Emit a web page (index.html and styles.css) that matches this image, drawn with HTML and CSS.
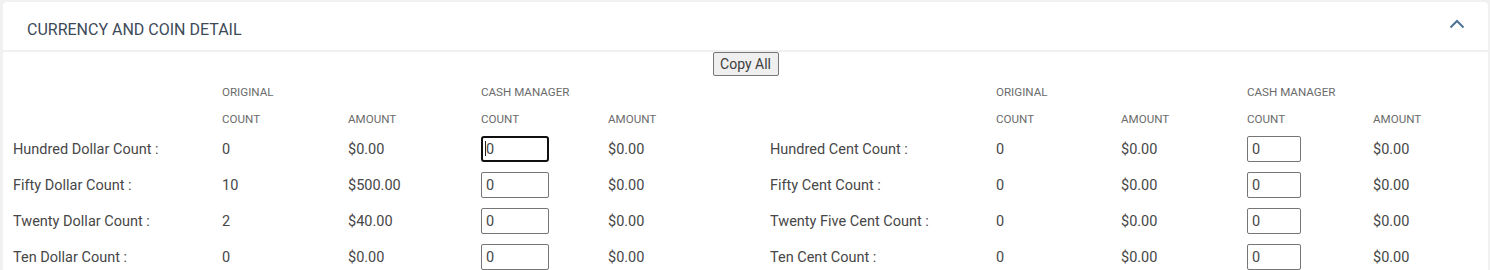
FILE: index.html
```html
<!DOCTYPE html>
<html lang="en">
<head>
<meta charset="utf-8">
<title>Currency and Coin Detail</title>
<link rel="stylesheet" href="styles.css">
</head>
<body>
<section class="card">
  <header class="card-head">
    <h2 class="title">CURRENCY AND COIN DETAIL</h2>
    <svg class="chev" width="16" height="10" viewBox="0 0 16 10"><polyline points="1.5,8.5 8,2 14.5,8.5" fill="none" stroke="#4f7395" stroke-width="2"/></svg>
  </header>
  <div class="card-body">
    <div class="btn-row"><button class="copy-btn">Copy All</button></div>
    <div class="tables">
      <div class="grid grid-left">
        <div></div><div class="th">ORIGINAL</div><div></div><div class="th">CASH MANAGER</div><div></div>
        <div class="th2"></div><div class="th2">COUNT</div><div class="th2">AMOUNT</div><div class="th2">COUNT</div><div class="th2">AMOUNT</div>

        <div class="td">Hundred Dollar Count :</div><div class="td">0</div><div class="td">$0.00</div><div class="td"><input class="cnt wide focused" value="0"><span class="caret"></span></div><div class="td">$0.00</div>
        <div class="td">Fifty Dollar Count :</div><div class="td">10</div><div class="td">$500.00</div><div class="td"><input class="cnt wide" value="0"></div><div class="td">$0.00</div>
        <div class="td">Twenty Dollar Count :</div><div class="td">2</div><div class="td">$40.00</div><div class="td"><input class="cnt wide" value="0"></div><div class="td">$0.00</div>
        <div class="td">Ten Dollar Count :</div><div class="td">0</div><div class="td">$0.00</div><div class="td"><input class="cnt wide" value="0"></div><div class="td">$0.00</div>
      </div>
      <div class="grid grid-right">
        <div></div><div class="th">ORIGINAL</div><div></div><div class="th">CASH MANAGER</div><div></div>
        <div class="th2"></div><div class="th2">COUNT</div><div class="th2">AMOUNT</div><div class="th2">COUNT</div><div class="th2">AMOUNT</div>

        <div class="td">Hundred Cent Count :</div><div class="td">0</div><div class="td">$0.00</div><div class="td"><input class="cnt narrow" value="0"></div><div class="td">$0.00</div>
        <div class="td">Fifty Cent Count :</div><div class="td">0</div><div class="td">$0.00</div><div class="td"><input class="cnt narrow" value="0"></div><div class="td">$0.00</div>
        <div class="td">Twenty Five Cent Count :</div><div class="td">0</div><div class="td">$0.00</div><div class="td"><input class="cnt narrow" value="0"></div><div class="td">$0.00</div>
        <div class="td">Ten Cent Count :</div><div class="td">0</div><div class="td">$0.00</div><div class="td"><input class="cnt narrow" value="0"></div><div class="td">$0.00</div>
      </div>
    </div>
  </div>
</section>
</body>
</html>
```

FILE: styles.css
```css
html, body {
  margin: 0;
  padding: 0;
  background: #f1f1f1;
  font-family: Roboto, "Liberation Sans", Arial, sans-serif;
  height: 270px;
  overflow: hidden;
}
.card {
  margin: 2px 2px 0 3px;
  background: #fff;
  border-radius: 4px 4px 0 0;
  height: 268px;
}
.card-head {
  height: 48px;
  border-bottom: 2px solid #f0f0f0;
  display: flex;
  align-items: center;
  justify-content: space-between;
  padding: 0 23px 0 24px;
  box-sizing: content-box;
}
.title {
  margin: 0;
  font-size: 16px;
  font-weight: 400;
  color: #3c4a58;
  position: relative;
  top: 3px;
}
.chev {
  display: block;
  position: relative;
  top: -2px;
}
.card-body {
  padding: 0 0 0 10px;
}
.btn-row {
  display: flex;
  justify-content: center;
  padding-right: 10px;
  height: 25px;
  align-items: flex-start;
}
.copy-btn {
  margin: 0;
  width: 66px;
  height: 24px;
  padding: 0;
  font-family: Roboto, "Liberation Sans", Arial, sans-serif;
  font-size: 14px;
  color: #3d3d3d;
  background: #efefef;
  border: 1px solid #767676;
  border-radius: 2px;
}
.tables {
  display: flex;
}
.grid {
  display: grid;
  grid-template-rows: 30px 24px 36px 36px 36px 36px;
  align-items: center;
}
.grid-left {
  grid-template-columns: 209px 126px 133px 127px 162px;
}
.grid-right {
  grid-template-columns: 226px 125px 126px 126px 100px;
}
.th, .th2 {
  font-size: 11.6px;
  color: #6b6b6b;
  letter-spacing: 0;
}
.td {
  font-size: 14.5px;
  color: #474747;
  white-space: nowrap;
  position: relative;
  display: flex;
  align-items: center;
}
.cnt {
  box-sizing: border-box;
  height: 26px;
  margin: 0;
  padding: 0 0 0 4px;
  border: 1px solid #767676;
  border-radius: 2px;
  font-family: Roboto, "Liberation Sans", Arial, sans-serif;
  font-size: 14.5px;
  color: #474747;
  background: #fff;
}
.wide { width: 68px; }
.narrow { width: 54px; }
.cnt.focused {
  border: 2px solid #101010;
  border-radius: 3px;
  padding-left: 3px;
  outline: none;
}
.caret {
  position: absolute;
  left: 4px;
  top: 50%;
  width: 1px;
  height: 15px;
  margin-top: -8px;
  background: #222;
}
```
